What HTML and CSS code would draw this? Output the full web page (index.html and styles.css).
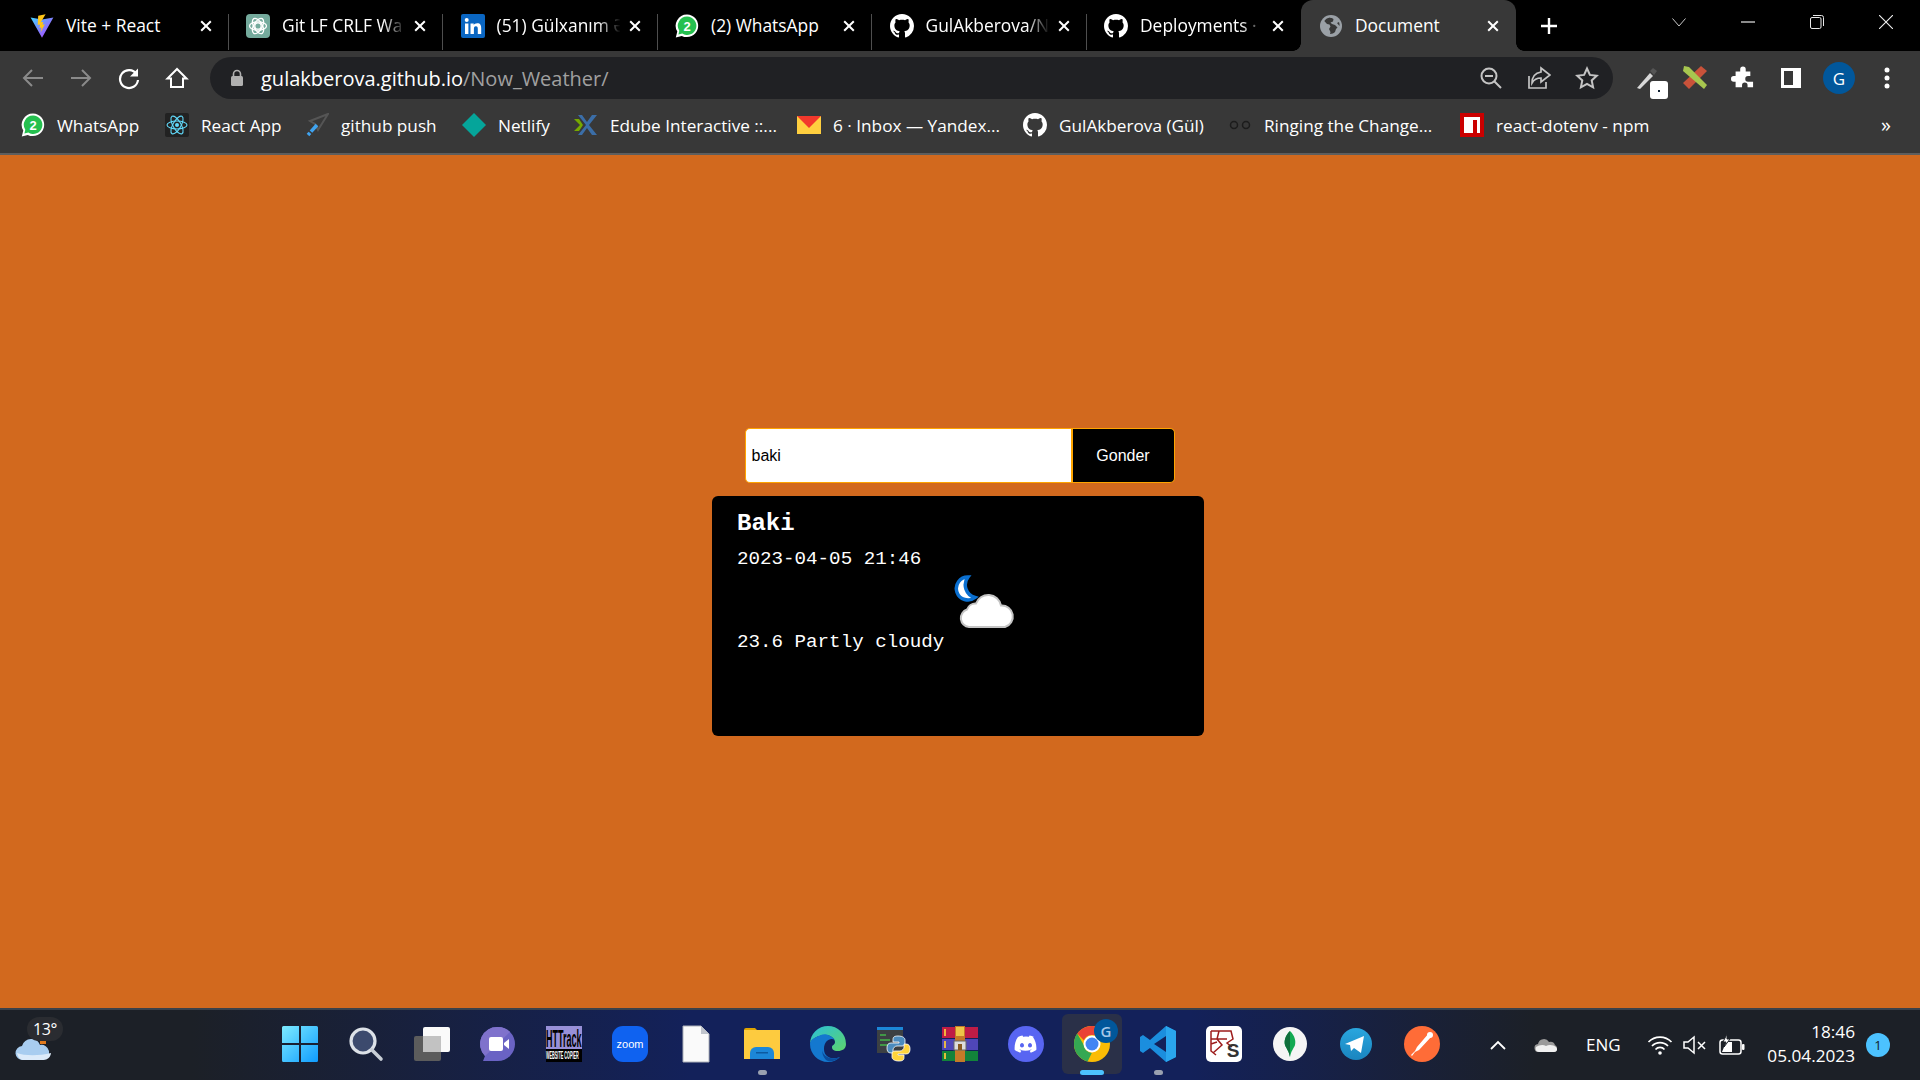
FILE: index.html
```html
<!DOCTYPE html>
<html lang="en">
<head>
<meta charset="utf-8">
<title>Document</title>
<link rel="stylesheet" href="styles.css">
</head>
<body>
<svg class="defs" aria-hidden="true">
  <symbol id="gh" viewBox="0 0 16 16"><path fill="#fff" d="M8 0C3.58 0 0 3.58 0 8c0 3.54 2.29 6.53 5.47 7.59.4.07.55-.17.55-.38 0-.19-.01-.82-.01-1.49-2.01.37-2.53-.49-2.69-.94-.09-.23-.48-.94-.82-1.13-.28-.15-.68-.52-.01-.53.63-.01 1.08.58 1.23.82.72 1.21 1.87.87 2.33.66.07-.52.28-.87.51-1.07-1.78-.2-3.64-.89-3.64-3.95 0-.87.31-1.59.82-2.15-.08-.2-.36-1.02.08-2.12 0 0 .67-.21 2.2.82.64-.18 1.32-.27 2-.27.68 0 1.36.09 2 .27 1.53-1.04 2.2-.82 2.2-.82.44 1.1.16 1.92.08 2.12.51.56.82 1.27.82 2.15 0 3.07-1.87 3.75-3.65 3.95.29.25.54.73.54 1.48 0 1.07-.01 1.93-.01 2.2 0 .21.15.46.55.38A8.013 8.013 0 0016 8c0-4.42-3.58-8-8-8z"/></symbol>
  <symbol id="wa" viewBox="0 0 24 24"><path fill="#fff" d="M12 .5A11.3 11.3 0 0 0 2.3 17.6L.8 23.4l6-1.5A11.3 11.3 0 1 0 12 .5z"/><path fill="#25c04f" d="M12 2.6a9.2 9.2 0 0 0-7.7 14.2l-.9 3.8 3.9-1A9.2 9.2 0 1 0 12 2.6z"/><text x="12" y="17" class="wa-n">2</text></symbol>
  <symbol id="x" viewBox="0 0 16 16"><path d="M3.2 3.2l9.6 9.6M12.8 3.2l-9.6 9.6" stroke="#fff" stroke-width="2" fill="none"/></symbol>
</svg>

<div class="screen">
  <header class="tabstrip">
    <div class="tab">
      <svg class="fav" viewBox="0 0 24 24"><path fill="url(#vg)" d="M.6 3.6L12 23.8 23.4 3.6 12 5.6z"/><path fill="#ffc517" d="M15.6.2L8.2 1.7l-.5 9.4 2.4-.5-.6 3.3 2-.5-.9 5 4.2-8.1-2.3.5.8-2.9-2.5.4z"/><defs><linearGradient id="vg" x1="0" y1="0" x2="1" y2="1"><stop offset="0" stop-color="#41d1ff"/><stop offset="1" stop-color="#bd34fe"/></linearGradient></defs></svg>
      <span class="tab-title">Vite + React</span>
      <svg class="tab-x"><use href="#x"/></svg>
    </div>
    <div class="tab">
      <svg class="fav" viewBox="0 0 24 24"><rect width="24" height="24" rx="4" fill="#74aa9c"/><g fill="none" stroke="#fff" stroke-width="1.3"><circle cx="12" cy="12" r="3.2"/><ellipse cx="12" cy="12" rx="8.5" ry="4.2"/><ellipse cx="12" cy="12" rx="8.5" ry="4.2" transform="rotate(60 12 12)"/><ellipse cx="12" cy="12" rx="8.5" ry="4.2" transform="rotate(120 12 12)"/></g></svg>
      <span class="tab-title fade">Git LF CRLF Wa</span>
      <svg class="tab-x"><use href="#x"/></svg>
    </div>
    <div class="tab">
      <svg class="fav" viewBox="0 0 24 24"><rect width="24" height="24" rx="2" fill="#0a66c2"/><path fill="#fff" d="M4 9.5h3.4V20H4zM5.700 4a2 2 0 1 1 0 4 2 2 0 0 1 0-4zM9.500 9.500h3.200v1.500c.6-1 1.800-1.800 3.500-1.800 3.300 0 4 2.100 4 5V20h-3.400v-5c0-1.400-.2-2.800-1.900-2.800s-2 1.300-2 2.700V20H9.500z"/></svg>
      <span class="tab-title fade">(51) Gülxanım Ə</span>
      <svg class="tab-x"><use href="#x"/></svg>
    </div>
    <div class="tab">
      <svg class="fav"><use href="#wa"/></svg>
      <span class="tab-title">(2) WhatsApp</span>
      <svg class="tab-x"><use href="#x"/></svg>
    </div>
    <div class="tab">
      <svg class="fav"><use href="#gh"/></svg>
      <span class="tab-title fade">GulAkberova/N</span>
      <svg class="tab-x"><use href="#x"/></svg>
    </div>
    <div class="tab tab-last">
      <svg class="fav"><use href="#gh"/></svg>
      <span class="tab-title fade">Deployments ·</span>
      <svg class="tab-x"><use href="#x"/></svg>
    </div>
    <div class="tab tab-active">
      <svg class="fav" viewBox="0 0 24 24"><circle cx="12" cy="12" r="11" fill="#9aa0a6"/><path fill="#383838" d="M11 3.500c-2 .3-4.500 1.500-5.700 3.500l2.700 3 2.500.5 1 2-1.500 2.500 1.500 3-.5 2c2 0 4-1 5-2l1-3 1.500-1.500-2.500-2.500-3-1-1.500-1.500 2.500-1 .5-2.500c-.7-.6-2-1.200-3-1zM20 8l-2 1 2.500 3c.2-1.300 0-2.800-.5-4z"/></svg>
      <span class="tab-title">Document</span>
      <svg class="tab-x"><use href="#x"/></svg>
    </div>
    <svg class="newtab" viewBox="0 0 18 18"><path d="M9 1v16M1 9h16" stroke="#fff" stroke-width="2.400"/></svg>
    <div class="winctl">
      <svg viewBox="0 0 14 14"><path d="M.5 3.500L7 11l6.500-7.500" fill="none" stroke="#c8c8c8"/></svg>
      <svg viewBox="0 0 14 14"><path d="M0 7h14" stroke="#e8e8e8" stroke-width="1.200"/></svg>
      <svg viewBox="0 0 14 14"><rect x=".5" y="2.500" width="10.500" height="11" rx="1.500" fill="none" stroke="#e8e8e8"/><path d="M3 .5h8.500a2 2 0 0 1 2 2V11" fill="none" stroke="#e8e8e8"/></svg>
      <svg viewBox="0 0 14 14"><path d="M0 0l14 14M14 0L0 14" stroke="#f0f0f0" stroke-width="1.100"/></svg>
    </div>
  </header>

  <nav class="toolbar">
    <svg class="tb" viewBox="0 0 24 24"><path d="M22 12H3M11 4l-8 8 8 8" fill="none" stroke="#8a8a8a" stroke-width="2"/></svg>
    <svg class="tb" viewBox="0 0 24 24"><path d="M2 12h19M13 4l8 8-8 8" fill="none" stroke="#8a8a8a" stroke-width="2"/></svg>
    <svg class="tb" viewBox="0 0 24 24"><path d="M19.500 8A9 9 0 1 0 21 14" fill="none" stroke="#fff" stroke-width="2.200"/><path d="M21 2.500v8h-8z" fill="#fff"/></svg>
    <svg class="tb" viewBox="0 0 24 24"><path d="M12 3L2.500 12.500H6V21h12v-8.500h3.500z" fill="none" stroke="#fff" stroke-width="2"/></svg>
    <div class="omnibox">
      <svg class="lock" viewBox="0 0 14 18"><path d="M3.500 8V5a3.500 3.500 0 0 1 7 0v3" fill="none" stroke="#b0b0b0" stroke-width="1.600"/><rect x="1" y="7" width="12" height="10" rx="1.500" fill="#b0b0b0"/></svg>
      <span class="url"><span class="host">gulakberova.github.io</span>/Now_Weather/</span>
      <div class="omni-icons">
        <svg viewBox="0 0 24 24"><circle cx="10" cy="10" r="7.500" fill="none" stroke="#c4c4c4" stroke-width="2"/><path d="M6 10h8M15.500 15.500l6.500 6.500" stroke="#c4c4c4" stroke-width="2"/></svg>
        <svg viewBox="0 0 24 24"><path d="M2 10v12h17v-6" fill="none" stroke="#c4c4c4" stroke-width="1.700"/><path d="M14 2l9 7-9 7v-4c-4 0-7 1.500-9 5 0-6 3-10 9-11z" fill="none" stroke="#c4c4c4" stroke-width="1.700"/></svg>
        <svg viewBox="0 0 24 24"><path d="M12 2.500l2.900 6.400 6.900.8-5.100 4.700 1.400 6.900-6.100-3.500-6.100 3.500 1.400-6.900-5.100-4.700 6.900-.8z" fill="none" stroke="#c4c4c4" stroke-width="2"/></svg>
      </div>
    </div>
    <div class="exts">
      <div class="ext ext-drop">
        <svg viewBox="0 0 24 24"><path d="M2 22L15 7l3 3L5 23z" fill="#d8d8d8"/><path d="M15 5l3-3 4 3-3 4z" fill="#555"/></svg>
        <span class="ext-badge"></span>
      </div>
      <svg class="ext" viewBox="0 0 24 24"><path d="M0 17L18 0l6 5L6 23z" fill="#c9523a"/><path d="M1 0l5 1 18 18-3 4L0 5z" fill="#a7c64f"/></svg>
      <svg class="ext" viewBox="0 0 24 24"><path fill="#fff" d="M9 2.500a3 3 0 0 1 6 0V5h5v5h-2.500a3 3 0 0 0 0 6H23v6h-6v-2a3 3 0 0 0-6 0v2H4v-6H2a3 3 0 0 1 0-6h2V5h5z" transform="scale(.92) translate(1 1)"/></svg>
      <svg class="ext" viewBox="0 0 24 24"><path fill="#fff" fill-rule="evenodd" d="M2 2h20v20H2zm3 3v14h9V5z"/></svg>
      <div class="avatar">G</div>
      <svg class="ext" viewBox="0 0 24 24"><circle cx="12" cy="4" r="2.500" fill="#fff"/><circle cx="12" cy="12" r="2.500" fill="#fff"/><circle cx="12" cy="20" r="2.500" fill="#fff"/></svg>
    </div>
  </nav>

  <nav class="bookmarks">
    <a class="bm"><svg class="fav"><use href="#wa"/></svg><span>WhatsApp</span></a>
    <a class="bm"><svg class="fav" viewBox="0 0 24 24"><rect width="24" height="24" rx="2" fill="#222"/><g fill="none" stroke="#61dafb" stroke-width="1.100"><ellipse cx="12" cy="12" rx="10" ry="4"/><ellipse cx="12" cy="12" rx="10" ry="4" transform="rotate(60 12 12)"/><ellipse cx="12" cy="12" rx="10" ry="4" transform="rotate(120 12 12)"/></g><circle cx="12" cy="12" r="2" fill="#61dafb"/></svg><span>React App</span></a>
    <a class="bm"><svg class="fav" viewBox="0 0 24 24"><path d="M23 1L5 8l5 3 3 6z" fill="none" stroke="#555" stroke-width="2"/><path d="M12 12l-9 10" stroke="#3fa3ef" stroke-width="3.500" stroke-dasharray="9 1.500"/></svg><span>github push</span></a>
    <a class="bm"><svg class="fav" viewBox="0 0 24 24"><path d="M12 0l12 12-12 12L0 12z" fill="#05a59a"/></svg><span>Netlify</span></a>
    <a class="bm"><svg class="fav" viewBox="0 0 24 24"><path d="M4 2l8 10-8 10h4l5-7 5 7h5l-8-10 8-10h-5l-5 7-5-7z" fill="#3b6ea8"/><path d="M0 6l6 6-6 6h5l4-6-4-6z" fill="#76a800"/></svg><span>Edube Interactive ::...</span></a>
    <a class="bm"><svg class="fav" viewBox="0 0 24 24"><rect y="3" width="24" height="18" fill="#ffcf3f"/><path d="M0 3h24L12 15z" fill="#f2382c"/></svg><span>6 · Inbox — Yandex...</span></a>
    <a class="bm"><svg class="fav"><use href="#gh"/></svg><span>GulAkberova (Gül)</span></a>
    <a class="bm"><svg class="fav" viewBox="0 0 24 24"><g fill="none" stroke="#1c1c1c" stroke-width="1.500"><circle cx="6" cy="12" r="3.500"/><circle cx="18" cy="12" r="3.500"/></g></svg><span>Ringing the Change...</span></a>
    <a class="bm"><svg class="fav" viewBox="0 0 24 24"><rect width="24" height="24" fill="#cb0000"/><path d="M4 4h16v16h-3V7h-4v13H4z" fill="#fff"/></svg><span>react-dotenv - npm</span></a>
    <span class="bm-more">»</span>
  </nav>

  <main class="page">
    <form class="search">
      <input class="search-input" type="text" value="baki">
      <button class="search-btn" type="button">Gonder</button>
    </form>
    <section class="card">
      <h1 class="city">Baki</h1>
      <p class="line">2023-04-05 21:46</p>
      <div class="now">
        <p class="line">23.6 Partly cloudy</p>
        <svg class="wicon" viewBox="0 0 64 64">
          <path d="M14 6a11.500 11.500 0 1 0 7 20.500A13 13 0 0 1 14 6z" fill="#fff" stroke="#0a6fd0" stroke-width="3.500"/>
          <path d="M15 56a9 9 0 0 1-2-17.500a9 9 0 0 1 9-6a13 13 0 0 1 25 2a11 11 0 0 1 4 21.500z" fill="#fff" stroke="#c4c4c4" stroke-width="2"/>
        </svg>
      </div>
    </section>
  </main>

  <footer class="taskbar">
    <div class="tb-left">
      <svg class="weather" viewBox="0 0 36 30"><path d="M25 6h6v6h-6z" fill="#e07a1e"/><path d="M8 28a7 7 0 0 1-1-14 9 9 0 0 1 9-7 9 9 0 0 1 9 6 7.500 7.500 0 0 1 3 15z" fill="#a8cdf0"/><path d="M2 21c8 3 22 3 34 0-.5 4-3 7-8 7H8c-3 0-5-3-6-7z" fill="#dcebfa"/></svg>
      <span class="temp-pill">13°</span>
    </div>
    <div class="tb-apps">
      <div class="app"><svg viewBox="0 0 36 36"><defs><linearGradient id="wing" x1="0" y1="0" x2="1" y2="1"><stop offset="0" stop-color="#7debff"/><stop offset="1" stop-color="#0f9cff"/></linearGradient></defs><path fill="url(#wing)" d="M0 1.500A1.500 1.500 0 0 1 1.500 0H17v17H0zM19 0h15.500A1.500 1.500 0 0 1 36 1.500V17H19zM0 19h17v17H1.500A1.500 1.500 0 0 1 0 34.500zM19 19h17v15.500a1.500 1.500 0 0 1-1.500 1.500H19z"/></svg></div>
      <div class="app"><svg viewBox="0 0 36 36"><circle cx="15" cy="15" r="12" fill="#3c4a6d" stroke="#dde2e8" stroke-width="3.200"/><path d="M24 24l9 9" stroke="#c8ced6" stroke-width="3.600" stroke-linecap="round"/></svg></div>
      <div class="app"><svg viewBox="0 0 36 36"><rect x="0" y="10" width="27" height="25" rx="2" fill="#5c5c5c"/><rect x="9" y="1" width="27" height="25" rx="2" fill="#fafafa"/><rect x="9" y="10" width="18" height="16" fill="#c2c2c2"/></svg></div>
      <div class="app"><svg viewBox="0 0 36 36"><path d="M18 1a17 17 0 0 1 0 34H3l2-5A17 17 0 0 1 18 1z" fill="#6a63c4"/><path d="M18 1a17 17 0 0 1 12 5L5 30A17 17 0 0 1 18 1z" fill="#7f72cc"/><rect x="9" y="11" width="14" height="14" rx="2" fill="#fff"/><path d="M24 17l5-4v10l-5-4z" fill="#fff"/></svg></div>
      <div class="app"><svg viewBox="0 0 36 36"><rect width="36" height="36" fill="#000"/><rect width="36" height="23" fill="#9890d8"/><text class="ht-a" transform="translate(0 21) scale(.75 2)">HTTrack</text><text class="ht-b" transform="translate(0 33) scale(.69 2)">WEBSITE COPIER</text></svg></div>
      <div class="app"><svg viewBox="0 0 36 36"><rect width="36" height="36" rx="11" fill="#0f62f0"/><text x="18" y="21.500" class="zoomt">zoom</text></svg></div>
      <div class="app"><svg viewBox="0 0 36 36"><path d="M5 0h18l8 8v28H5z" fill="#fafafa" stroke="#aeb2ba"/><path d="M23 0v8h8z" fill="#c0c4cc"/></svg></div>
      <div class="app app-open"><svg viewBox="0 0 36 36"><path d="M0 4a2 2 0 0 1 2-2h9l3 3h-14z" fill="#e0a400"/><rect y="4" width="36" height="29" fill="#fdcb3f"/><path d="M6 33v-6a6 6 0 0 1 6-6h12a6 6 0 0 1 6 6v6z" fill="#1c87d8"/><rect x="12" y="26" width="12" height="1.500" fill="#0c5aa0"/></svg></div>
      <div class="app"><svg viewBox="0 0 36 36"><defs><linearGradient id="edge" x1="0" y1="0" x2="1" y2="1"><stop offset="0" stop-color="#2bbfd9"/><stop offset="1" stop-color="#5dd46c"/></linearGradient></defs><path d="M18 0a18 18 0 0 1 18 18c0 5-4 7-8 7-5 0-6-2-6-4s3-2 3-5-4-7-9-7C8 9 1 13 0 18A18 18 0 0 1 18 0z" fill="url(#edge)"/><path d="M0 18c0 10 8 18 18 18 5 0 9-2 12-5-7 3-16 1-16-8s7-12 11-9c-3-4-9-7-14-5S0 13 0 18z" fill="#1478cf"/><path d="M12 23c0 7 9 12 18 8-5 5-11 5-14 3-3-3-4-7-4-11z" fill="#0a4c9c"/></svg></div>
      <div class="app"><svg viewBox="0 0 36 36"><rect x="1" y="1" width="26" height="26" fill="#3c4043"/><rect x="1" y="1" width="26" height="3" fill="#1c87d8"/><path d="M4 9h6M4 14h10M4 19h8" stroke="#43b549" stroke-width="1.300"/><path d="M22 10c-5 0-5 2-5 4v2h6v1h-8c-3 0-4 2-4 5s1 5 4 5h2v-3c0-2 2-4 4-4h5c2 0 3-1 3-3v-3c0-2-2-4-7-4z" fill="#4b8bbe" stroke="#fff" stroke-width=".8"/><path d="M23 35c5 0 5-2 5-4v-2h-6v-1h8c3 0 4-2 4-5s-1-5-4-5h-2v3c0 2-2 4-4 4h-5c-2 0-3 1-3 3v3c0 2 2 4 7 4z" fill="#ffd43b" stroke="#fff" stroke-width=".8"/></svg></div>
      <div class="app"><svg viewBox="0 0 36 36"><rect y="1" width="36" height="11" fill="#bf1c46"/><rect y="13" width="36" height="11" fill="#4f46b8"/><rect y="25" width="36" height="10" fill="#12833a"/><path d="M3 3v7M3 15v7M3 27v6" stroke="#f8c43c" stroke-width="1.800"/><rect x="13" y="0" width="10" height="36" fill="#c47a28"/><rect x="14" y="1" width="8" height="9" fill="#eec548"/><rect x="12" y="15" width="12" height="9" fill="#ddd" stroke="#666"/><rect x="16" y="18" width="4" height="6" fill="#8a5a20"/></svg></div>
      <div class="app"><svg viewBox="0 0 36 36"><circle cx="18" cy="18" r="18" fill="#5865f2"/><path fill="#fff" d="M26 11a18 18 0 0 0-4.500-1.400l-.6 1.200a17 17 0 0 0-5.800 0l-.6-1.200A18 18 0 0 0 10 11C7 15 6.300 20 6.700 24a18 18 0 0 0 5.500 2.700l1.200-1.900-2-1 .5-.4a13 13 0 0 0 11.200 0l.5.400-2 1 1.200 1.900a18 18 0 0 0 5.500-2.700c.5-4.700-.8-9-3.300-13zM14 21.500c-1.100 0-2-1-2-2.300s.9-2.300 2-2.300 2 1 2 2.300-.9 2.300-2 2.300zm8 0c-1.100 0-2-1-2-2.300s.9-2.300 2-2.300 2 1 2 2.300-.9 2.300-2 2.300z"/></svg></div>
      <div class="app app-active"><svg class="chrome" viewBox="0 0 36 36"><circle cx="18" cy="18" r="18" fill="#fbbc05"/><path d="M18 0a18 18 0 0 1 15.600 9H18a9 9 0 0 0-8.200 5.300L3.200 7.600A18 18 0 0 1 18 0z" fill="#ea4335"/><path d="M0 18A18 18 0 0 1 3.200 7.600l6.600 11.400a9 9 0 0 0 8 8l-4.200 8.500A18 18 0 0 1 0 18z" fill="#34a853"/><circle cx="18" cy="18" r="8.500" fill="#fff"/><circle cx="18" cy="18" r="6.500" fill="#4285f4"/></svg><span class="chrome-g">G</span></div>
      <div class="app app-open"><svg viewBox="0 0 36 36"><path d="M26 0l10 5v26l-10 5-16-14-7 5-3-2V11l3-2 7 5zM26 10L14 18l12 8z" fill="#1b8ede"/><path d="M26 0l10 5v26l-10 5z" fill="#2aa6ee"/></svg></div>
      <div class="app"><svg viewBox="0 0 36 36"><rect width="36" height="36" rx="5" fill="#fff"/><path d="M5 5h20l2 8-6 4 5 4M5 5v20l5 4M5 13h16M13 5l-2 8 5 6-9 8M5 18l6-2" fill="none" stroke="#9d1c1c" stroke-width="1.500"/><text x="27" y="31" class="ks">S</text></svg></div>
      <div class="app"><svg viewBox="0 0 36 36"><circle cx="18" cy="18" r="17" fill="#f5f5f5"/><path d="M18 5c5 5 6 10 5 14-1 3-4 6-5 12-1-6-4-9-5-12-1-4 0-9 5-14z" fill="#13aa52"/><path d="M18 5c-5 5-6 10-5 14 1 3 4 6 5 12z" fill="#0f6f3c"/></svg></div>
      <div class="app"><svg viewBox="0 0 36 36"><defs><linearGradient id="tg" x1="0" y1="0" x2="0" y2="1"><stop offset="0" stop-color="#2aa6de"/><stop offset="1" stop-color="#1a85bf"/></linearGradient></defs><circle cx="18" cy="18" r="16" fill="url(#tg)"/><path d="M7 18l19-8-3 17-7-5-3 3-1-6z" fill="#fff"/></svg></div>
      <div class="app"><svg viewBox="0 0 36 36"><circle cx="18" cy="18" r="18" fill="#ff6c37"/><path d="M25 7l3 3-13 14-4 2-3 4-1-1 4-4 2-4z" fill="#fff"/><circle cx="26" cy="9" r="3" fill="#fff"/></svg></div>
    </div>
    <div class="tray">
      <svg class="t-chev" viewBox="0 0 16 10"><path d="M1 9l7-7 7 7" fill="none" stroke="#fff" stroke-width="1.800"/></svg>
      <svg class="t-cloud" viewBox="0 0 24 16"><path d="M5 15a4 4 0 0 1-1-8 6 6 0 0 1 11-2 5 5 0 0 1 6 3 4 4 0 0 1 0 7z" fill="#9a9a9a"/><path d="M5 15c-3 0-4-3-3-5 3-2 7-3 10-1 3-2 8-1 10 1s1 5-2 5z" fill="#f0f0f0"/></svg>
      <span class="t-lang">ENG</span>
      <svg class="t-wifi" viewBox="0 0 26 20"><path d="M1.500 7a16 16 0 0 1 23 0M5 11a11 11 0 0 1 16 0M8.500 14.500a6 6 0 0 1 9 0" fill="none" stroke="#fff" stroke-width="1.700"/><circle cx="13" cy="18" r="1.800" fill="#fff"/></svg>
      <svg class="t-spk" viewBox="0 0 24 20"><path d="M1 7v6h4l6 5V2L5 7z" fill="none" stroke="#fff" stroke-width="1.500"/><path d="M15 7l7 7M22 7l-7 7" stroke="#fff" stroke-width="1.500"/></svg>
      <svg class="t-bat" viewBox="0 0 26 22"><rect x="1" y="6" width="21" height="14" rx="2.500" fill="none" stroke="#fff" stroke-width="1.500"/><rect x="23" y="10" width="2.500" height="6" rx="1" fill="#fff"/><path d="M3 18l4-10h6v10z" fill="#fff"/><path d="M8 0L4 8h3L5 13l6-8H8z" fill="#fff" stroke="#1c2027"/></svg>
      <div class="clock"><span>18:46</span><span>05.04.2023</span></div>
      <span class="notif">1</span>
    </div>
  </footer>
</div>
</body>
</html>
```
FILE: styles.css
```css
* { box-sizing: border-box; }
html, body { margin: 0; height: 100%; }
body { font-family: "Open Sans", "Noto Sans", sans-serif; color: #fff; overflow: hidden; }
.defs { display: none; }
.wa-n { font: 700 13px "Liberation Sans", sans-serif; fill: #fff; text-anchor: middle; }
.screen { height: 1080px; display: flex; flex-direction: column; background: #383838; }

/* tab strip */
.tabstrip { height: 51px; flex: none; background: #000; display: flex; align-items: stretch; padding-left: 14px; position: relative; }
.tab { width: 214.5px; flex: none; display: flex; align-items: center; padding: 0 15px 0 17.5px; position: relative; }
.tab:first-child { padding-left: 16px; }
.tab::after { content: ""; position: absolute; right: 0; top: 14px; height: 36px; width: 1px; background: #4e4e4e; }
.tab-last::after { display: none; }
.fav { width: 24px; height: 24px; flex: none; }
.tab .fav { margin-right: 12px; }
.tab-title { flex: 1; min-width: 0; margin-top: -1px; white-space: nowrap; overflow: hidden; font-size: 17.4px; color: #fff; }
.fade { -webkit-mask-image: linear-gradient(90deg, #000 80%, transparent 98%); mask-image: linear-gradient(90deg, #000 80%, transparent 98%); }
.tab-x { width: 16px; height: 16px; flex: none; margin-left: 4px; }
.tab-active { background: #383838; border-radius: 12px 12px 0 0; width: 215px; padding-left: 18px; }
.tab-active::before, .tab-active::after { content: ""; display: block; position: absolute; top: auto; bottom: 0; width: 8px; height: 8px; background: radial-gradient(circle at 0 0, #000 7.500px, #383838 8px); }
.tab-active::before { left: -8px; }
.tab-active::after { right: -8px; background: radial-gradient(circle at 100% 0, #000 7.500px, #383838 8px); }
.newtab { width: 18px; height: 18px; align-self: center; margin-left: 24px; flex: none; }
.winctl { display: grid; grid-template-columns: repeat(4, 69px); justify-items: center; align-items: center; margin-left: 86.5px; height: 44px; }
.winctl svg { width: 14px; height: 14px; }

/* toolbar */
.toolbar { height: 54px; flex: none; display: flex; align-items: center; padding: 6px 9px 6px 21px; }
.tb { width: 24px; height: 24px; margin-right: 24px; flex: none; }
.tb:nth-child(4) { margin-right: 21px; }
.omnibox { width: 1403px; height: 42px; flex: none; background: #202124; border-radius: 21px; display: flex; align-items: center; padding-left: 20px; padding-right: 2px; }
.lock { width: 14px; height: 18px; flex: none; margin-right: 17px; }
.url { font-size: 20px; color: #a0a0a0; white-space: nowrap; flex: 1; }
.host { color: #fff; }
.omni-icons { display: grid; grid-template-columns: repeat(3, 48px); justify-items: center; }
.omni-icons svg { width: 24px; height: 24px; }
.exts { display: grid; grid-template-columns: repeat(6, 48px); justify-items: center; align-items: center; margin-left: 10px; }
.ext { width: 24px; height: 24px; }
.ext-drop { position: relative; }
.ext-drop svg { width: 24px; height: 24px; display: block; }
.ext-badge { position: absolute; left: 15px; top: 15px; width: 18px; height: 18px; background: #fff; border-radius: 3px; }
.ext-badge::after { content: ""; position: absolute; left: 8px; top: 9px; width: 2px; height: 2px; background: #123; }
.avatar { width: 32px; height: 32px; border-radius: 50%; background: #01579b; font-size: 17px; display: flex; align-items: center; justify-content: center; }

/* bookmarks */
.bookmarks { height: 48px; flex: none; display: grid; grid-template-columns: 144px 140px 157px 112px 223px 226px 205px 232px 414px 1fr; align-items: center; padding-left: 21px; padding-bottom: 8px; }
.bm { display: flex; align-items: center; gap: 12px; font-size: 17.2px; white-space: nowrap; }
.bm-more { font-size: 20px; line-height: 20px; padding-left: 7px; }

/* page */
.page { flex: 1; min-height: 0; border-top: 2px solid #5e5e5e; background: #d2691e; padding-top: 1px; display: flex; flex-direction: column; align-items: center; justify-content: center; gap: 13px; }
.search { display: flex; width: 430px; height: 55px; margin-left: -1px; }
.search-input { width: 328px; height: 55px; border: 1px solid #ffa500; border-right-width: 2px; border-radius: 5px 0 0 5px; padding: 0 6px; background: #fff; font: 16px "Liberation Sans", sans-serif; color: #000; outline: none; }
.search-btn { width: 102px; height: 55px; border: 1px solid #ffa500; border-left: 0; border-radius: 0 5px 5px 0; background: #000; color: #fff; font: 16px "Liberation Sans", sans-serif; padding: 0; }
.card { width: 492px; height: 240px; margin-left: -4px; background: #000; border-radius: 6px; padding: 14px 25px; font-family: "Liberation Mono", monospace; }
.city { margin: 0; font-size: 24px; line-height: 27px; font-weight: 700; }
.line { margin: 0; font-size: 19.2px; line-height: 22px; }
.city + .line { margin-top: 11px; }
.now { display: flex; align-items: flex-end; margin-top: 1px; }
.wicon { width: 64px; height: 64px; flex: none; margin-left: 10px; margin-bottom: 18px; }

/* taskbar */
.taskbar { height: 72px; flex: none; border-top: 2px solid #3b414a; background: linear-gradient(90deg, #1c2027 0, #1c2027 10%, #13215a 36%, #13215a 62%, #1c2027 80%); display: grid; grid-template-columns: 267px 1188px 1fr; align-items: center; }
.tb-left { position: relative; height: 70px; }
.weather { position: absolute; left: 15px; top: 22px; width: 36px; height: 30px; }
.temp-pill { position: absolute; left: 27px; top: 7px; width: 36px; height: 24px; border-radius: 12px; background: #2a2c31; font-size: 16px; line-height: 24px; letter-spacing: -.3px; text-align: center; }
.tb-apps { display: grid; grid-template-columns: repeat(18, 66px); height: 70px; }
.app { position: relative; display: flex; align-items: center; justify-content: center; margin: 4px 3px 6px; border-radius: 6px; }
.app svg { width: 36px; height: 36px; overflow: visible; }
.app-open::after, .app-active::after { content: ""; position: absolute; left: 50%; bottom: -1px; width: 9px; height: 5px; margin-left: -4.5px; border-radius: 3px; background: #9aa1b0; }
.app-active { background: #2a3048; }
.app-active::after { width: 24px; margin-left: -12px; background: #4cc2ff; }
.chrome-g { position: absolute; left: 32px; top: 5px; width: 24px; height: 24px; border-radius: 50%; background: #01579b; font-size: 15px; font-weight: 600; color: #a8c8e8; display: flex; align-items: center; justify-content: center; }
.ht-a { font: 700 12px "Liberation Sans", sans-serif; fill: #000; }
.ht-b { font: 700 5.500px "Liberation Sans", sans-serif; fill: #fff; }
.zoomt { font: 400 11px "Liberation Sans", sans-serif; fill: #fff; text-anchor: middle; }
.ks { font: 700 19px "Liberation Sans", sans-serif; fill: #333; text-anchor: middle; }
.tray { display: flex; align-items: center; height: 70px; padding-left: 35px; }
.t-chev { width: 16px; height: 10px; flex: none; }
.t-cloud { width: 24px; height: 16px; flex: none; margin-left: 28px; }
.t-lang { width: 34px; flex: none; margin-left: 28px; margin-bottom: 2px; font-size: 17px; text-align: center; }
.t-wifi { width: 26px; height: 20px; flex: none; margin-left: 27px; }
.t-spk { width: 24px; height: 20px; flex: none; margin-left: 10px; }
.t-bat { width: 26px; height: 22px; flex: none; margin-left: 12px; }
.clock { width: 110px; flex: none; margin-bottom: 2px; display: flex; flex-direction: column; align-items: flex-end; font-size: 17.2px; line-height: 24px; }
.notif { width: 24px; height: 24px; flex: none; margin-left: 11px; border-radius: 50%; background: #4cc2ff; color: #10202c; font-size: 13px; line-height: 24px; text-align: center; }
```
